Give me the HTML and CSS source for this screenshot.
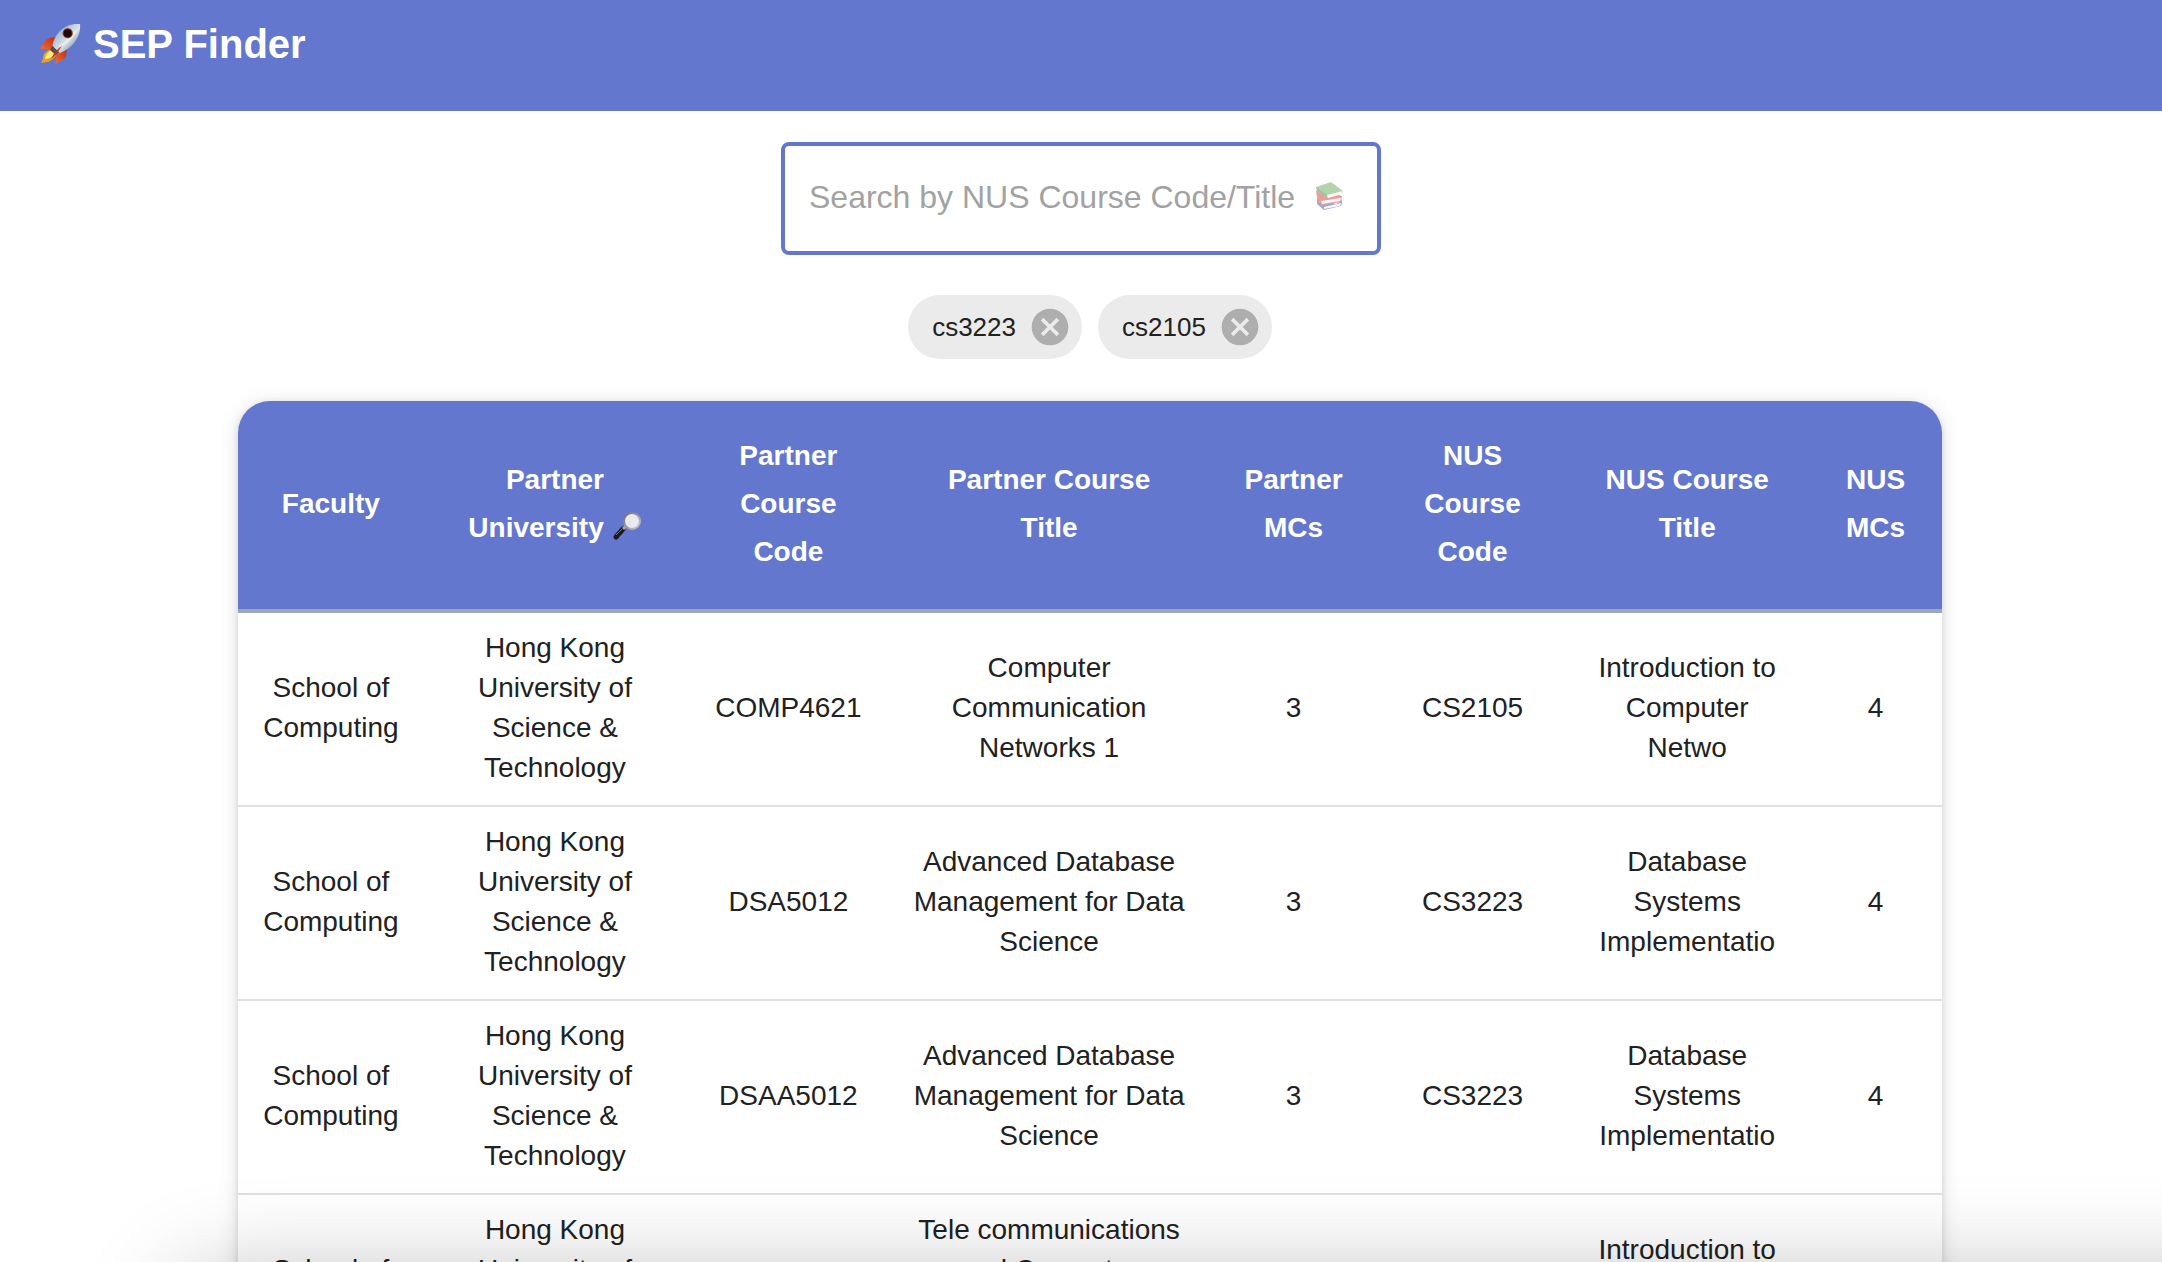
FILE: index.html
```
<!DOCTYPE html>
<html lang="en">

<head>
    <meta charset="UTF-8">
    <meta name="viewport" content="width=device-width, initial-scale=1">
    <title>SEP Finder</title>
    <link rel="stylesheet" href="styles.css">
</head>

<body>

    <!-- Shared emoji artwork -->
    <svg class="sprite" width="0" height="0" aria-hidden="true">
        <defs>
            <linearGradient id="hull" x1="0" y1="0" x2="1" y2="1">
                <stop offset="0" stop-color="#4f7fb0" />
                <stop offset=".3" stop-color="#a9c2d6" />
                <stop offset=".55" stop-color="#dfe4e6" />
                <stop offset=".8" stop-color="#7f9ab4" />
                <stop offset="1" stop-color="#2f5f90" />
            </linearGradient>
            <linearGradient id="fin" x1="1" y1="0" x2="0" y2="1">
                <stop offset="0" stop-color="#c3270f" />
                <stop offset="1" stop-color="#f4712d" />
            </linearGradient>
            <linearGradient id="rim" x1="0" y1="0" x2="1" y2="1">
                <stop offset="0" stop-color="#6f7072" />
                <stop offset="1" stop-color="#c9c9c9" />
            </linearGradient>
        </defs>
    </svg>

    <header class="navbar">
        <h1 class="brand">
            <svg class="rocket" viewBox="0 0 40 40" aria-hidden="true">
                <path d="M16 13Q10 13 6 15L0 24L11 25Z" fill="url(#fin)" />
                <path d="M26 24Q26 29 25 33L15 39L16 29Z" fill="url(#fin)" />
                <path d="M9 25Q2 29 3 34L1 38L7 37Q13 36 16 29Z" fill="#f0a020" />
                <path d="M10 26Q5 30 5 34Q11 34 14 29Z" fill="#fff27a" />
                <path d="M12 22Q14 10 23 4Q31 -1 39 0Q40 8 35 16Q29 25 18 29Z" fill="url(#hull)" />
                <path d="M12 21L19 28L15 30L10 25Z" fill="#4a515c" />
                <path d="M22 20Q18 28 11 34L14 28Z" fill="#d02a12" />
                <path d="M19 22Q29 17 35 7" fill="none" stroke="#f3f6f8" stroke-width="2" opacity=".6" />
                <circle cx="27" cy="9" r="5" fill="#b5301f" />
                <circle cx="27" cy="9" r="4" fill="#160c0c" />
            </svg>
            SEP Finder
        </h1>
    </header>

    <main class="content">
        <div class="search">
            <input class="search-input" id="search" type="text" aria-label="Search by NUS Course Code/Title" placeholder="Search by NUS Course Code/Title">
            <svg class="books" viewBox="0 0 30 30" aria-hidden="true">
                <path d="M2 17L21 23L27 19L27 22L26 25L9 29L2 23Z" fill="#2b4590" />
                <path d="M9 26L26 22L25 25L9 28Z" fill="#eee" />
                <path d="M1 10L5 8L27 15L26 21L7 24L3 21Z" fill="#d8281f" />
                <path d="M6 20L26 17L25 20L7 23Z" fill="#f4f0f0" />
                <path d="M1 6L16 1L28 10L28 12L12 17L3 11Z" fill="#5ca03f" />
                <path d="M12 14L28 10L27 13L13 17Z" fill="#f6f6f6" />
                <path d="M1 6L12 14L12 17L2 10Z" fill="#357a28" />
            </svg>
        </div>

        <div class="chips">
            <span class="chip">cs3223
                <button class="chip-delete" type="button" aria-label="Remove cs3223">
                    <svg viewBox="0 0 24 24" aria-hidden="true">
                        <path d="M12 2C6.47 2 2 6.47 2 12s4.47 10 10 10 10-4.47 10-10S17.53 2 12 2zm5 13.59L15.59 17 12 13.41 8.41 17 7 15.59 10.59 12 7 8.41 8.41 7 12 10.59 15.59 7 17 8.41 13.41 12 17 15.59z" />
                    </svg>
                </button>
            </span>
            <span class="chip">cs2105
                <button class="chip-delete" type="button" aria-label="Remove cs2105">
                    <svg viewBox="0 0 24 24" aria-hidden="true">
                        <path d="M12 2C6.47 2 2 6.47 2 12s4.47 10 10 10 10-4.47 10-10S17.53 2 12 2zm5 13.59L15.59 17 12 13.41 8.41 17 7 15.59 10.59 12 7 8.41 8.41 7 12 10.59 15.59 7 17 8.41 13.41 12 17 15.59z" />
                    </svg>
                </button>
            </span>
        </div>

        <div class="table-card">
            <table class="courses">
                <colgroup>
                    <col class="col-faculty">
                    <col class="col-university">
                    <col class="col-partner-code">
                    <col class="col-partner-title">
                    <col class="col-partner-mcs">
                    <col class="col-nus-code">
                    <col class="col-nus-title">
                    <col class="col-nus-mcs">
                </colgroup>
                <thead>
                    <tr>
                        <th scope="col">Faculty</th>
                        <th scope="col">Partner University&nbsp;<svg class="magnifier" viewBox="0 0 30 30" aria-hidden="true">
                                <path d="M4 26L11 18" stroke="#1b1b1f" stroke-width="5" stroke-linecap="round" />
                                <path d="M4 24L10 18" stroke="#77777c" stroke-width="1" />
                                <path d="M11 18L14 15" stroke="#a7a7a7" stroke-width="3" />
                                <circle cx="20" cy="10" r="8" fill="#e9eaf0" stroke="url(#rim)" stroke-width="2" />
                            </svg></th>
                        <th scope="col">Partner Course Code</th>
                        <th scope="col">Partner Course Title</th>
                        <th scope="col">Partner MCs</th>
                        <th scope="col">NUS Course Code</th>
                        <th scope="col">NUS Course Title</th>
                        <th scope="col">NUS MCs</th>
                    </tr>
                </thead>
                <tbody>
                    <tr>
                        <td>School of Computing</td>
                        <td>Hong Kong University of Science &amp; Technology</td>
                        <td>COMP4621</td>
                        <td>Computer Communication Networks 1</td>
                        <td>3</td>
                        <td>CS2105</td>
                        <td>Introduction to Computer Netwo</td>
                        <td>4</td>
                    </tr>
                    <tr>
                        <td>School of Computing</td>
                        <td>Hong Kong University of Science &amp; Technology</td>
                        <td>DSA5012</td>
                        <td>Advanced Database Management for Data Science</td>
                        <td>3</td>
                        <td>CS3223</td>
                        <td>Database Systems Implementatio</td>
                        <td>4</td>
                    </tr>
                    <tr>
                        <td>School of Computing</td>
                        <td>Hong Kong University of Science &amp; Technology</td>
                        <td>DSAA5012</td>
                        <td>Advanced Database Management for Data Science</td>
                        <td>3</td>
                        <td>CS3223</td>
                        <td>Database Systems Implementatio</td>
                        <td>4</td>
                    </tr>
                    <tr>
                        <td>School of Computing</td>
                        <td>Hong Kong University of Science &amp; Technology</td>
                        <td>ELEC3120</td>
                        <td>Tele communications and Computer Communication Networks</td>
                        <td>3</td>
                        <td>CS2105</td>
                        <td>Introduction to Computer Netwo</td>
                        <td>4</td>
                    </tr>
                </tbody>
            </table>
        </div>
    </main>

    <div class="bottom-shade"></div>

</body>

</html>
```
FILE: styles.css
```
* {
    box-sizing: border-box;
}

html,
body {
    margin: 0;
    padding: 0;
    height: 100%;
}

body {
    overflow: hidden auto;
    scrollbar-width: none;
    background: #fff;
    color: #212121;
    font-family: "Liberation Sans", Arial, sans-serif;
    font-size: 28px;
}

.sprite {
    position: absolute;
}

.navbar {
    height: 111px;
    padding: 20px 40px;
    background: #6377ce;
}

.brand {
    display: flex;
    align-items: center;
    gap: 12px;
    margin: 0;
    color: #fff;
    font-size: 40px;
    line-height: 48px;
}

.rocket {
    width: 41px;
    height: 41px;
}

.content {
    padding-top: 31px;
}

/* Search box */
.search {
    position: relative;
    width: 600px;
    max-width: 100%;
    margin: 0 auto;
}

.search-input {
    display: block;
    width: 100%;
    height: 113px;
    padding: 0 24px 2px;
    border: 4px solid #6377ce;
    border-radius: 8px;
    outline: none;
    color: #212121;
    font-family: inherit;
    font-size: 32px;
}

.search-input::placeholder {
    color: #a2a2a2;
    opacity: 1;
}

/* sits over the input, after the placeholder */
.books {
    position: absolute;
    top: 39px;
    right: 36px;
    width: 30px;
    height: 30px;
    opacity: 0.45;
}

/* Selected courses */
.chips {
    display: flex;
    justify-content: center;
    gap: 16px;
    padding: 40px 0 42px 18px;
}

.chip {
    display: flex;
    align-items: center;
    gap: 12px;
    height: 64px;
    padding: 0 10px 0 24px;
    border-radius: 32px;
    background: #ebebeb;
    font-size: 26px;
}

.chip-delete {
    width: 44px;
    height: 44px;
    padding: 0;
    border: 0;
    background: none;
    cursor: pointer;
}

.chip-delete svg {
    display: block;
    fill: #aeaeae;
}

/* Results */
.table-card {
    margin: 0 220px 0 238px;
    border-radius: 32px;
    overflow: hidden;
    background: #fff;
    box-shadow: 0 2px 6px rgba(0, 0, 0, 0.12), 0 2px 20px rgba(0, 0, 0, 0.12);
}

.courses {
    width: 100%;
    table-layout: fixed;
    border-collapse: separate;
    border-spacing: 0;
    text-align: center;
}

.courses th {
    padding: 31px 28px 33px;
    border-bottom: 4px solid #9ca9b5;
    background: #6377ce;
    color: #fff;
    line-height: 48px;
}

.courses td {
    padding: 15px 18px 17px;
    border-bottom: 2px solid #e0e0e0;
    line-height: 40px;
}

.col-faculty,
.col-nus-code {
    width: 10.9%;
}

.col-university {
    width: 15.4%;
}

.col-partner-code {
    width: 12%;
}

.col-partner-title {
    width: 18.6%;
}

.col-partner-mcs {
    width: 10.1%;
}

.col-nus-title {
    width: 14.3%;
}

.col-nus-mcs {
    width: 7.8%;
}

.magnifier {
    width: 30px;
    height: 30px;
    vertical-align: -4px;
}

/* soft shade rising from the bottom edge */
.bottom-shade {
    position: fixed;
    top: calc(100% + 20px);
    left: 180px;
    right: -200px;
    height: 200px;
    border-radius: 40px;
    box-shadow: 0 0 100px rgba(0, 0, 0, 0.3);
    pointer-events: none;
}
```
